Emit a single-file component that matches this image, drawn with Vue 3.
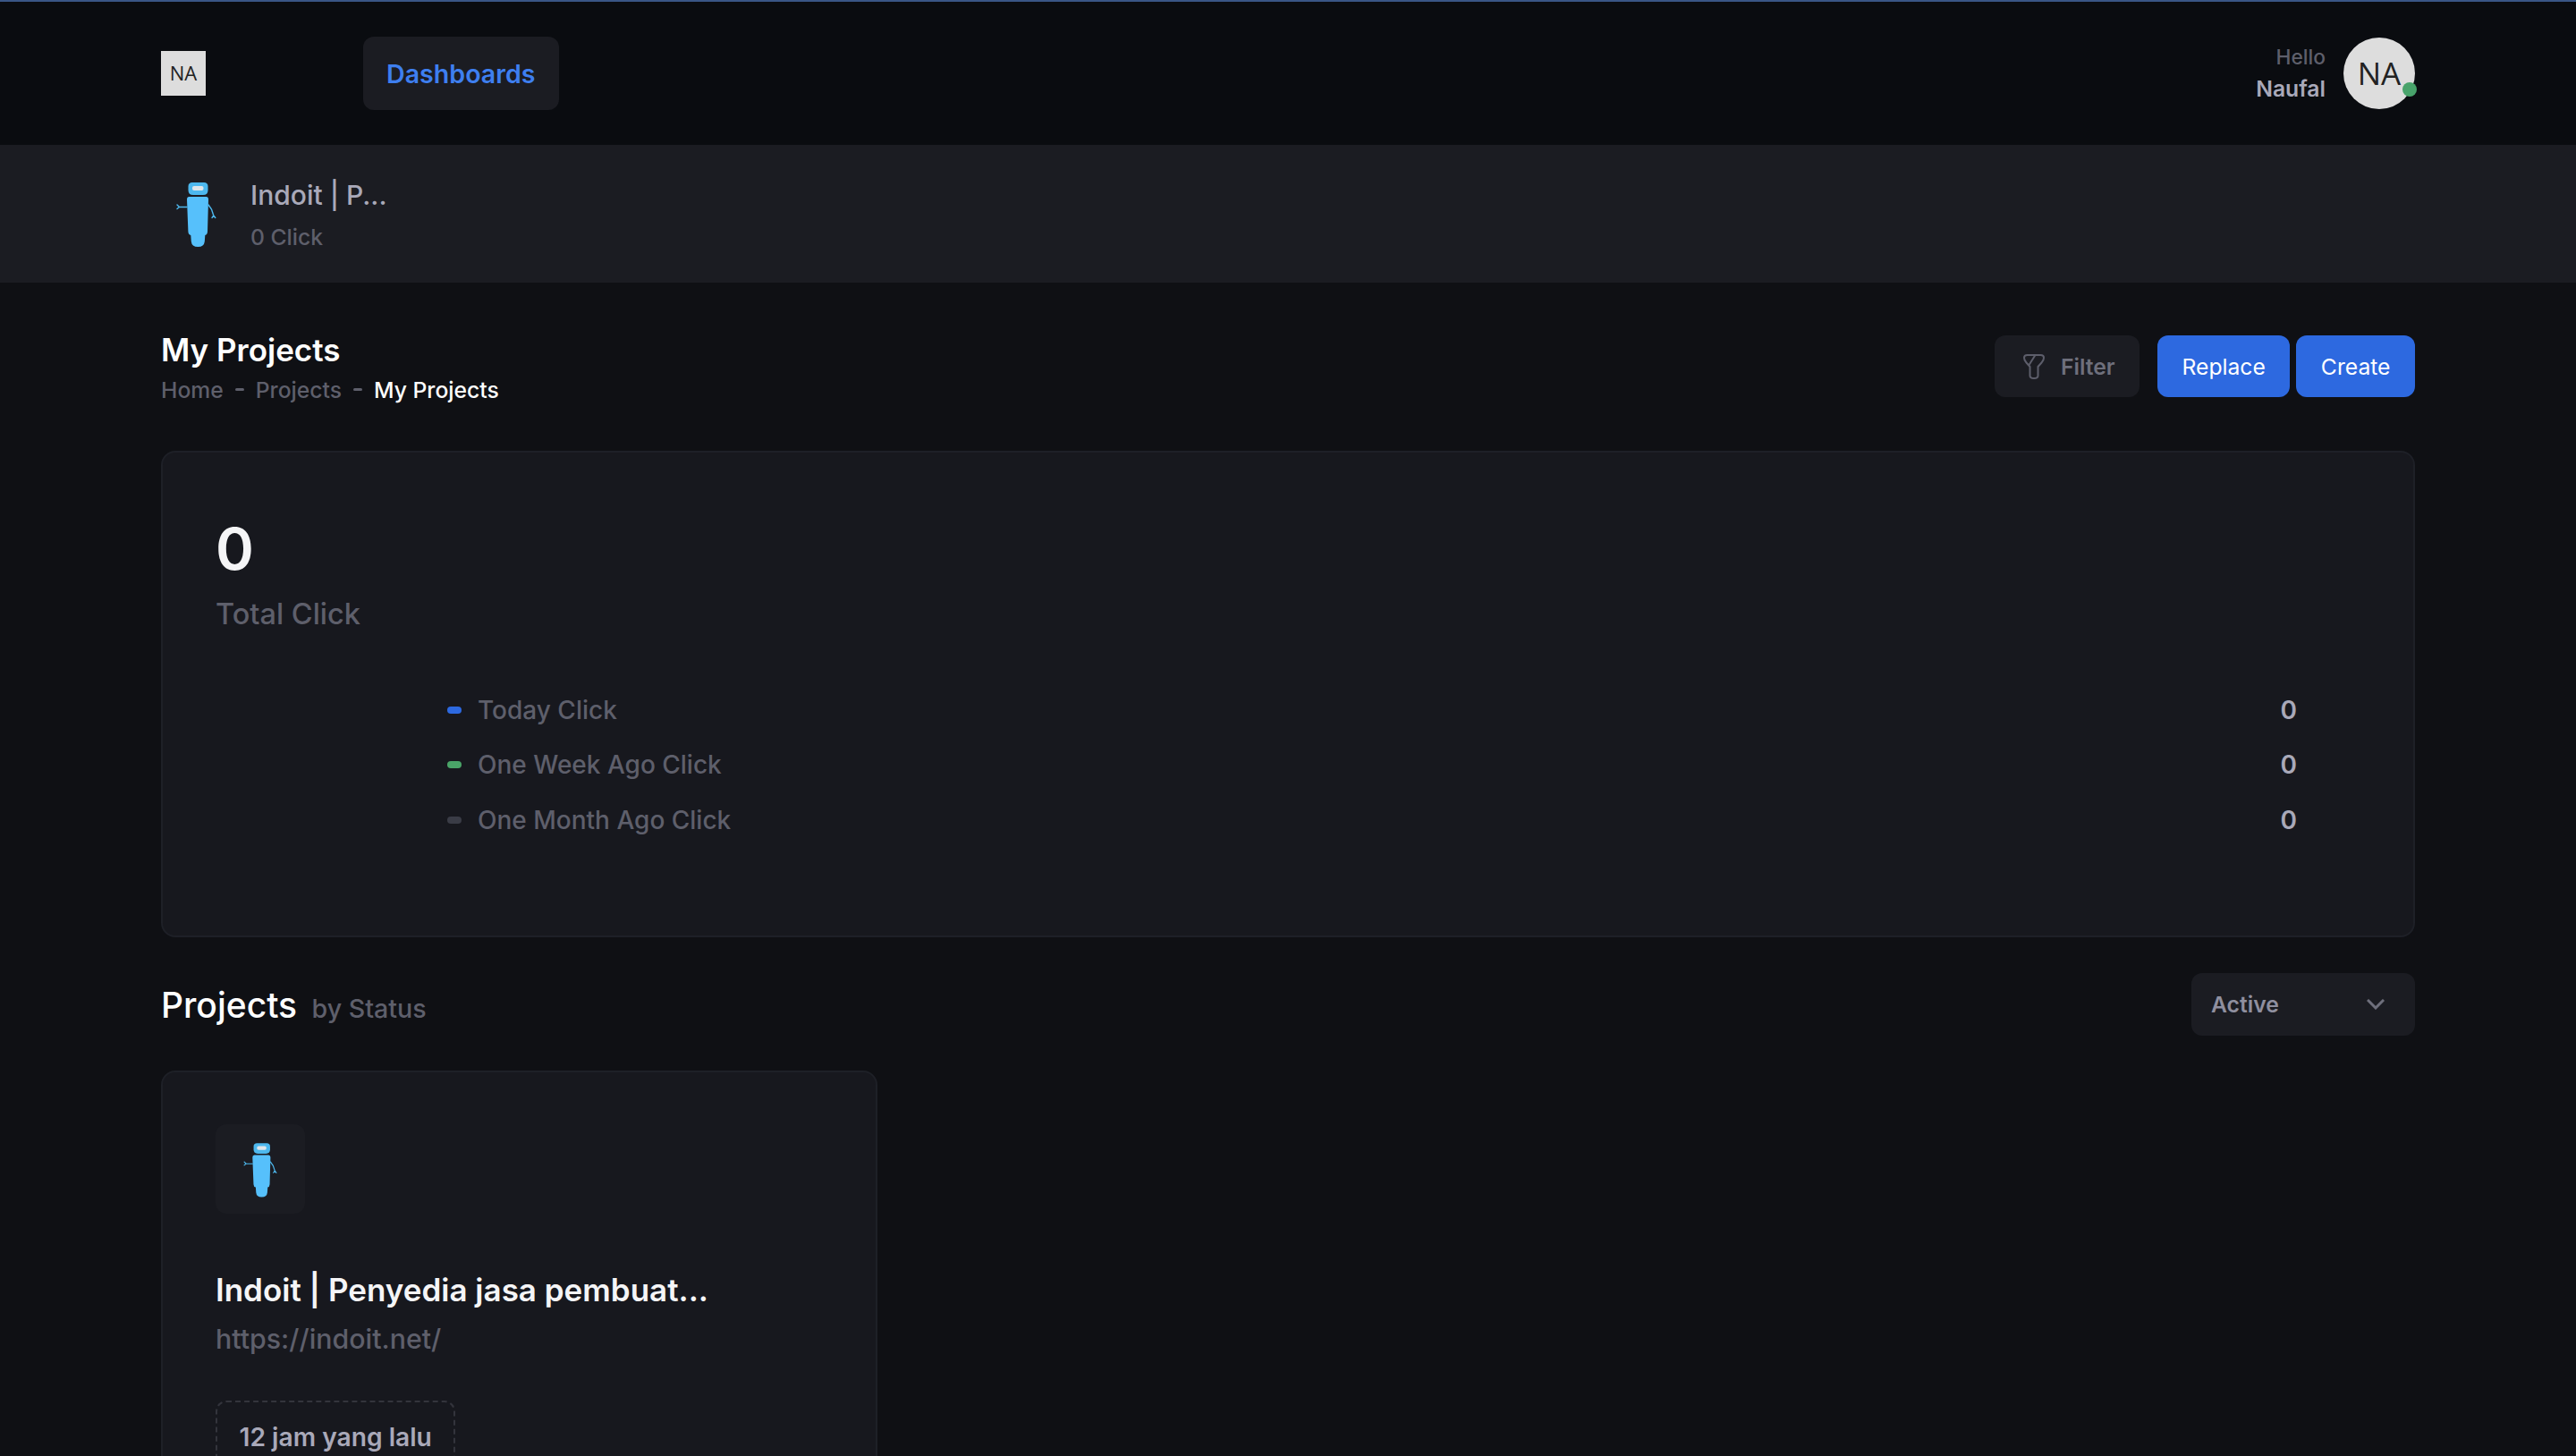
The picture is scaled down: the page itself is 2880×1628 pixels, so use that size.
<script setup>
const legend = [
  { label: 'Today Click', value: 0, color: '#2d69e0' },
  { label: 'One Week Ago Click', value: 0, color: '#4aa468' },
  { label: 'One Month Ago Click', value: 0, color: '#3a3c46' },
]
</script>

<template>
  <div class="page">
    <header class="topbar">
      <div class="wrap topbar-inner">
        <div class="logo"><span class="initials">NA</span></div>
        <nav class="nav"><a class="nav-item">Dashboards</a></nav>
        <div class="user">
          <div class="user-text">
            <span class="hello">Hello</span>
            <span class="name">Naufal</span>
          </div>
          <div class="avatar"><span class="initials">NA</span><i class="online"></i></div>
        </div>
      </div>
    </header>

    <section class="strip">
      <div class="wrap strip-inner">
        <svg class="robot" viewBox="0 0 80 80">
          <g id="robot">
            <path d="M35 5h13q4.500 0 4.500 4.500v4q0 5.500-5.500 5.500H36q-5.500 0-5.500-5.500v-4Q30.500 5 35 5z" fill="#4db8ee" />
            <rect x="35" y="9" width="12.500" height="5" rx="2" fill="#dfe6ea" />
            <path d="M31.500 21H50.500Q53 21 53 24L52 60Q51.800 63.500 49.300 64L48.800 71Q48.200 77 41.300 77 34.400 77 33.800 71L33.300 64Q30.600 63.500 30.400 60L29 24Q29 21 31.500 21Z" fill="#56c0fb" />
            <path d="M29 32.500H20.500M18 30l2.500 2.500L18 34.500M53 30l3.500 5 2.300 7M58.800 42l-1.800 2.500M58.800 42l2 2.500" fill="none" stroke="#4db8ee" stroke-width="1.400" stroke-linecap="round" />
          </g>
        </svg>
        <div class="strip-text">
          <div class="strip-title">Indoit | P...</div>
          <div class="strip-sub">0 Click</div>
        </div>
      </div>
    </section>

    <main class="wrap main">
      <div class="toolbar">
        <div class="heading">
          <h1 class="title">My Projects</h1>
          <ul class="crumbs">
            <li>Home</li><li class="dash"></li><li>Projects</li><li class="dash"></li><li class="on">My Projects</li>
          </ul>
        </div>
        <div class="actions">
          <button class="btn btn-light">
            <svg class="funnel" viewBox="0 0 24 28" fill="none" stroke="#5d5e6b" stroke-width="2" stroke-linejoin="round">
              <path d="M4.500 1h15Q23 1 23 4q0 3-2.500 5.500L16.500 14v10q0 3-4.500 3t-4.500-3V14L3.500 9.500Q1 7 1 4t3.500-3z" />
              <path d="M13.500 1 6.500 12" />
            </svg>
            Filter
          </button>
          <div class="blue-group">
            <button class="btn btn-blue">Replace</button>
            <button class="btn btn-blue">Create</button>
          </div>
        </div>
      </div>

      <section class="card stats">
        <div class="big">0</div>
        <div class="big-label">Total Click</div>
        <div class="legend">
          <div v-for="row in legend" :key="row.label" class="legend-row">
            <i class="bullet" :style="{ background: row.color }"></i>
            <span class="legend-label">{{ row.label }}</span>
            <span class="legend-value">{{ row.value }}</span>
          </div>
        </div>
      </section>

      <div class="section-head">
        <h2 class="section-title">Projects <small>by Status</small></h2>
        <div class="select">
          <span>Active</span>
          <svg width="20" height="12" viewBox="0 0 20 12" fill="none" stroke="#6e6f7c" stroke-width="3">
            <path d="M1 1l9 9 9-9" />
          </svg>
        </div>
      </div>

      <article class="card project">
        <div class="project-icon">
          <svg class="robot-sm" viewBox="0 0 80 80"><use href="#robot" /></svg>
        </div>
        <div class="project-title">Indoit | Penyedia jasa pembuat...</div>
        <div class="project-url">https://indoit.net/</div>
        <div class="stamp">12 jam yang lalu</div>
      </article>
    </main>
  </div>
</template>

<style>
html, body { margin: 0; background: #0f1014; }
</style>

<style scoped>
.page {
  height: 1628px;
  overflow: hidden;
  background: #0f1014;
  font-family: Inter, "Liberation Sans", sans-serif;
  color: #fff;
}
.wrap { width: 2520px; margin: 0 auto; }
.topbar {
  height: 160px;
  background: #0a0c10;
  border-top: 2px solid #3a5686;
}
.topbar-inner { height: 160px; display: flex; align-items: center; }
.logo {
  width: 50px;
  height: 50px;
  background: #dddddd;
  color: #222;
  font-family: "Open Sans", sans-serif;
  font-size: 22px;
  display: flex;
  align-items: center;
  justify-content: center;
}
.initials { margin-top: -2px; }
.nav { margin-left: 176px; flex: 1; }
.nav-item {
  display: inline-flex;
  align-items: center;
  height: 82px;
  padding: 0 26px;
  border-radius: 12px;
  background: #1b1c22;
  color: #3e7ff0;
  font-size: 28.600px;
  font-weight: 600;
}
.user { display: flex; align-items: center; gap: 20px; }
.user-text { display: flex; flex-direction: column; align-items: flex-end; padding-top: 2px; }
.hello { color: #5e5f6b; font-size: 22.750px; line-height: 30px; font-weight: 500; }
.name { color: #a9a9b9; font-size: 24.700px; line-height: 38px; font-weight: 600; margin-top: 1px; }
.avatar {
  position: relative;
  width: 80px;
  height: 80px;
  border-radius: 50%;
  background: #dddddd;
  color: #222;
  font-family: "Open Sans", sans-serif;
  font-size: 35px;
  display: flex;
  align-items: center;
  justify-content: center;
}
.online {
  position: absolute;
  right: -2px;
  bottom: 14px;
  width: 16px;
  height: 16px;
  border-radius: 50%;
  background: #48a36b;
}
.strip { height: 154px; background: #1b1c22; }
.strip-inner { height: 154px; display: flex; align-items: center; gap: 20px; }
.robot { width: 80px; height: 80px; flex: none; }
.strip-title { color: #a9a9b9; font-size: 30px; line-height: 44px; font-weight: 500; }
.strip-sub { color: #5e5f6b; font-size: 24.700px; line-height: 34px; font-weight: 500; margin-top: 8px; }
.main { padding-top: 58px; }
.toolbar { display: flex; justify-content: space-between; align-items: center; height: 71px; margin-bottom: 59px; }
.heading { padding-top: 1px; }
.title { margin: 0; font-size: 35px; line-height: 42px; font-weight: 600; color: #fff; }
.crumbs {
  display: flex;
  align-items: center;
  list-style: none;
  margin: 9px 0 0;
  padding: 0;
  color: #5e5f6b;
  font-size: 24.700px;
  line-height: 30px;
  font-weight: 500;
}
.crumbs .on { color: #fff; }
.dash { width: 10px; height: 3px; background: #5e5f6b; margin: 0 13px; border-radius: 2px; }
.actions { display: flex; align-items: center; gap: 20px; }
.btn {
  height: 69px;
  border: 0;
  border-radius: 12px;
  font: 400 24.700px Inter, "Liberation Sans", sans-serif;
  display: inline-flex;
  align-items: center;
  justify-content: center;
}
.btn-light { width: 162px; background: #1b1c22; color: #6e6f7c; font-weight: 600; gap: 18px; padding: 0 28px 0 32px; justify-content: flex-start; }
.funnel { width: 24px; height: 28px; flex: none; }
.blue-group { display: flex; gap: 7px; }
.btn-blue { background: #2d69e0; color: #fff; padding: 0 27.500px; }
.card { background: #17181e; border: 2px solid #1e2027; border-radius: 16px; box-sizing: border-box; }
.stats { height: 544px; padding: 69px 60px 60px 59px; }
.big { font-size: 65px; line-height: 78px; font-weight: 600; color: #f5f5f7; }
.big-label { color: #5e5f6b; font-size: 32.500px; line-height: 40px; font-weight: 500; margin-top: 14px; }
.legend { margin: 56px 70px 0 259px; }
.legend-row { display: flex; align-items: center; height: 61.500px; font-size: 28px; font-weight: 500; }
.bullet { width: 16px; height: 8px; border-radius: 4px; margin-right: 18px; }
.legend-label { flex: 1; color: #5e5f6b; }
.legend-value { color: #a9a9b9; font-weight: 600; }
.section-head { display: flex; justify-content: space-between; align-items: center; margin-top: 39px; height: 72px; margin-bottom: 38px; }
.section-title { margin: 0; font-size: 39px; font-weight: 500; color: #fff; }
.section-title small { margin-left: 6px; font-size: 28.600px; font-weight: 500; color: #5e5f6b; }
.select {
  width: 250px;
  height: 70px;
  box-sizing: border-box;
  padding: 0 34px 0 22px;
  background: #1b1c22;
  border-radius: 12px;
  color: #8f8f9f;
  font-size: 24.700px;
  font-weight: 600;
  display: flex;
  align-items: center;
  justify-content: space-between;
}
.project { width: 801px; padding: 58px 60px 0 59px; height: 500px; }
.project-icon {
  width: 100px;
  height: 100px;
  background: #1b1c22;
  border-radius: 12px;
  display: flex;
  align-items: center;
  justify-content: center;
}
.robot-sm { width: 67px; height: 67px; }
.project-title { margin-top: 61px; font-size: 35px; line-height: 48px; font-weight: 600; color: #f5f5f7; }
.project-url { margin-top: 9px; font-size: 30.300px; line-height: 44px; font-weight: 500; color: #5e5f6b; }
.stamp {
  display: inline-block;
  margin-top: 47px;
  padding: 21px 24.500px;
  border: 2px dashed #33343c;
  border-radius: 12px;
  color: #a9a9b9;
  font-size: 28.200px;
  font-weight: 600;
  line-height: 36px;
}
</style>
